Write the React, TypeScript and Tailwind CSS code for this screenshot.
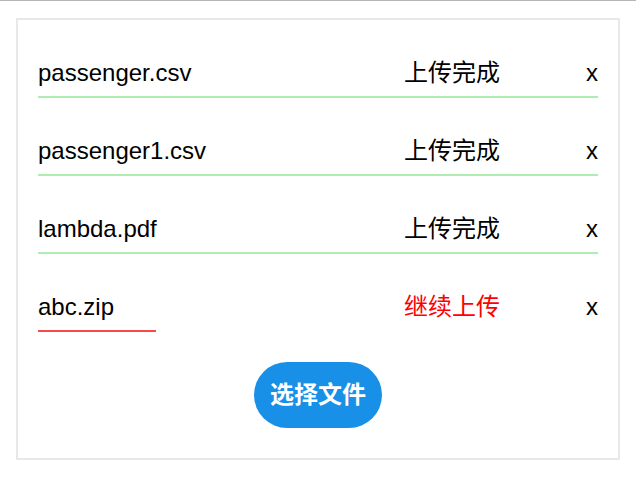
import { useState } from "react";

type UploadFile = {
  id: number;
  name: string;
  done: boolean;
  progress: number;
};

const initialFiles: UploadFile[] = [
  { id: 1, name: "passenger.csv", done: true, progress: 100 },
  { id: 2, name: "passenger1.csv", done: true, progress: 100 },
  { id: 3, name: "lambda.pdf", done: true, progress: 100 },
  { id: 4, name: "abc.zip", done: false, progress: 21 },
];

// 文件上传列表 - 每行显示文件名、状态和删除按钮，下方线条表示进度
export default function App() {
  const [files, setFiles] = useState<UploadFile[]>(initialFiles);

  const removeFile = (id: number) => {
    setFiles((prev) => prev.filter((f) => f.id !== id));
  };

  return (
    <div
      className="min-h-[482px] bg-white border-t border-[#b5b5b5] pt-[17px]"
      style={{ fontFamily: '"Liberation Sans", "Noto Sans CJK SC", sans-serif' }}
    >
      <div className="mx-4 border-2 border-[#e8e8e8] px-5 pb-[30px]">
        <ul className="flex flex-col">
          {files.map((file) => (
            <li key={file.id} className="pt-[35px]">
              <div className="flex items-center text-[24px] leading-[36px] text-black pb-[5px]">
                <span className="flex-1">{file.name}</span>
                <span
                  className={
                    file.done
                      ? "w-[182px] text-black"
                      : "w-[182px] text-[#ff0000]"
                  }
                >
                  {file.done ? "上传完成" : "继续上传"}
                </span>
                <button
                  type="button"
                  onClick={() => removeFile(file.id)}
                  className="w-[12px] text-[24px] leading-[36px] text-black"
                >
                  x
                </button>
              </div>
              <div
                className={
                  file.done ? "h-[2px] bg-[#b0ecb0]" : "h-[2px] bg-[#f74a4a]"
                }
                style={{ width: `${file.progress}%` }}
              />
            </li>
          ))}
        </ul>
        <div className="flex justify-center pt-[30px]">
          <button
            type="button"
            className="h-[66px] w-[128px] rounded-full bg-[#1890e8] text-[24px] font-bold text-white"
          >
            选择文件
          </button>
        </div>
      </div>
    </div>
  );
}
